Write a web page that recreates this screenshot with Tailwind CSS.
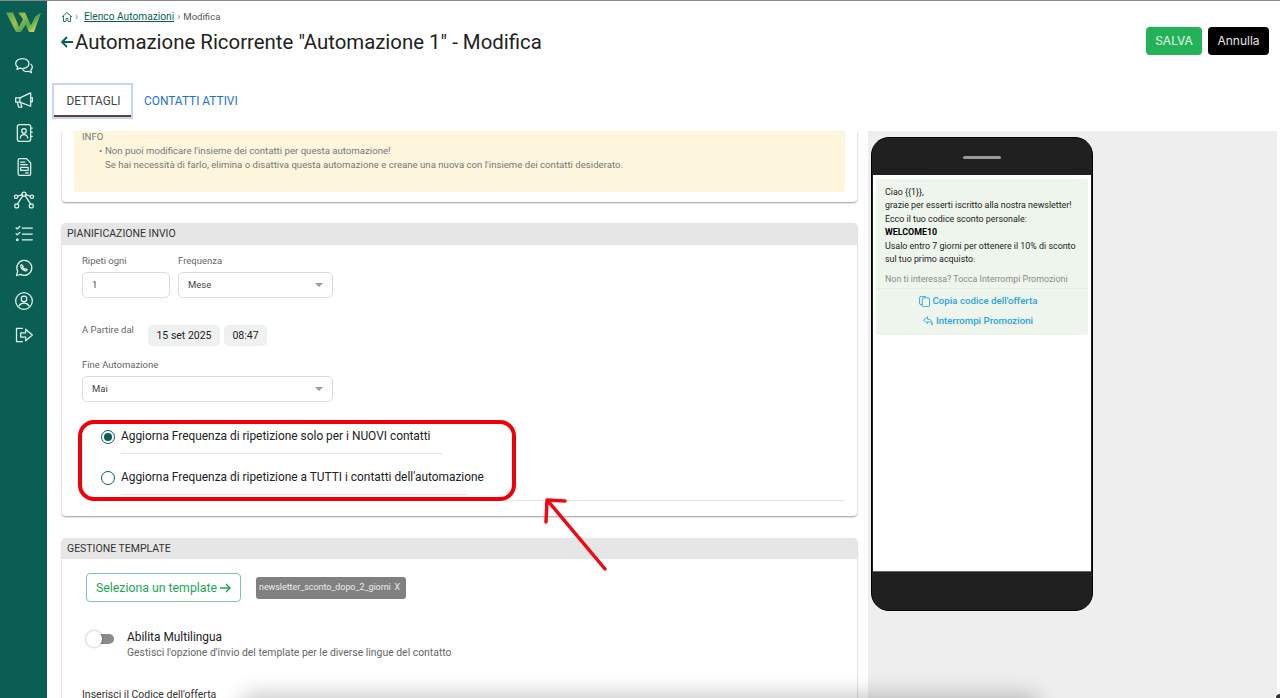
<!DOCTYPE html>
<html lang="it">
<head>
    <meta charset="UTF-8">
    <title>Automazione Ricorrente - Modifica</title>
    <script src="https://cdn.jsdelivr.net/npm/@tailwindcss/browser@4"></script>
</head>
<body class="font-['Roboto',sans-serif] bg-white overflow-hidden">
<div class="relative flex h-[698px] w-[1280px] overflow-hidden border-t border-[#8a8a8a]">

    <!-- sidebar -->
    <aside class="w-[47px] shrink-0 bg-[#0b5e54] flex flex-col items-center text-[#e4f2ee]">
        <svg class="mt-[9px] w-[36px] h-[22px]" viewBox="0 0 36 26" preserveAspectRatio="none">
            <defs><linearGradient id="logo" x1="0" y1="0" x2="1" y2="0.6"><stop offset="0" stop-color="#5aa34a"/><stop offset="0.45" stop-color="#9dc04a"/><stop offset="0.75" stop-color="#4fa552"/><stop offset="1" stop-color="#c5d64f"/></linearGradient></defs>
            <path d="M0 3h7l6 17 4-9 3 6-5 9h-5zM12 3h7l6 15 4-10 6-5-7 23h-5l-5-13-2-4z" fill="url(#logo)"/>
        </svg>
        <div class="mt-[24px] flex flex-col items-center gap-[13.6px]">
            <svg class="w-[20px] h-[20px]" viewBox="0 0 24 24" fill="none" stroke="currentColor" stroke-width="1.5" stroke-linejoin="round"><path d="M10 3c-4.5 0-8 2.7-8 6 0 1.7 1 3.2 2.400 4.300L3.500 16l3.500-1.500c1 .3 2 .5 3 .5 4.500 0 8-2.700 8-6s-3.500-6-8-6z"/><path d="M20 9.500c1.300 1 2 2.300 2 3.800 0 1.400-.7 2.700-1.800 3.600l.8 3.100-3.500-1.700c-2.800.7-6-.2-7.500-2.300"/></svg>
            <svg class="w-[20px] h-[20px]" viewBox="0 0 24 24" fill="none" stroke="currentColor" stroke-width="1.5" stroke-linejoin="round"><path d="M2 9.500h5l13-6v16l-13-5h-5z"/><path d="M7 9.500v5M4 14.500l1.500 6h4l-1.500-5"/><path d="M20 9h2v5h-2"/></svg>
            <svg class="w-[20px] h-[20px]" viewBox="0 0 24 24" fill="none" stroke="currentColor" stroke-width="1.5" stroke-linejoin="round" stroke-linecap="round"><rect x="4" y="2" width="16" height="20" rx="2.500"/><circle cx="12" cy="9.500" r="2.700"/><path d="M7.500 18c.5-3 2.500-4 4.500-4s4 1 4.500 4M20 6h2M20 11h2M20 16h2"/></svg>
            <svg class="w-[20px] h-[20px]" viewBox="0 0 24 24" fill="none" stroke="currentColor" stroke-width="1.5" stroke-linejoin="round" stroke-linecap="round"><path d="M5 4a2 2 0 0 1 2-2h8l5 5v13a2 2 0 0 1-2 2H7a2 2 0 0 1-2-2z"/><path d="M8 6h5M8 9h8"/><rect x="8" y="12.500" width="9" height="3.500"/><path d="M14 19h3"/></svg>
            <svg class="w-[22px] h-[20px]" viewBox="0 0 26 24" fill="none" stroke="currentColor" stroke-width="1.500" stroke-linejoin="round" stroke-linecap="round"><circle cx="13" cy="5" r="2.400"/><circle cx="3.500" cy="8" r="2"/><circle cx="22.500" cy="8" r="2"/><rect x="2" y="17" width="4.500" height="4.500" rx="1"/><rect x="19.500" y="17" width="4.500" height="4.500" rx="1"/><path d="M5.500 7.500 10.700 5.500M15.300 5.500 20.500 7.500M11.500 7 5 17M14.500 7 21 17"/></svg>
            <svg class="w-[20px] h-[20px]" viewBox="0 0 24 24" fill="none" stroke="currentColor" stroke-width="1.500" stroke-linecap="round" stroke-linejoin="round"><path d="M10 5h12M10 12h12M10 19h12M2.500 4.500l1.500 1.500 3-3M2.500 11.500l1.500 1.500 3-3"/><circle cx="4" cy="19" r="1"/></svg>
            <svg class="w-[20px] h-[20px]" viewBox="0 0 24 24" fill="none" stroke="currentColor" stroke-width="1.500" stroke-linejoin="round" stroke-linecap="round"><path d="M3 21l1.400-5A9 9 0 1 1 8 19.700z"/><path d="M9 8c-1 .5-1.200 1.700-.6 3 .8 1.800 2.600 3.600 4.600 4.200 1.300.4 2.400 0 2.800-1l-2-1.400-1 .8c-1-.4-2-1.400-2.500-2.500l.8-1z"/></svg>
            <svg class="w-[20px] h-[20px]" viewBox="0 0 24 24" fill="none" stroke="currentColor" stroke-width="1.500" stroke-linecap="round"><circle cx="12" cy="12" r="10"/><circle cx="12" cy="9.500" r="3.300"/><path d="M6 18c1-2.500 3.200-3.500 6-3.500s5 1 6 3.500"/></svg>
            <svg class="w-[20px] h-[20px]" viewBox="0 0 24 24" fill="none" stroke="currentColor" stroke-width="1.500" stroke-linejoin="round" stroke-linecap="round"><path d="M10 4H3v16h7"/><path d="M8 9.500h6V5l8 7-8 7v-4.500H8z"/></svg>
        </div>
    </aside>

    <main class="flex-1 min-w-0 flex flex-col">
        <!-- header -->
        <header class="h-[130px] shrink-0 pl-[14px] pr-[11px]">
            <div class="flex justify-between">
                <div>
                    <nav class="mt-[10px] flex items-center text-[10.200px] leading-[12px] text-[#555]">
                        <svg class="w-[12px] h-[12px] text-[#2f7a6c]" viewBox="0 0 24 24" fill="none" stroke="currentColor" stroke-width="2" stroke-linejoin="round"><path d="M2 12 12 3l10 9M5 10v11h5v-6h4v6h5V10"/></svg>
                        <span class="ml-[2px] mr-[6px] text-[#888]">›</span>
                        <a class="underline text-[#0b5e54]">Elenco Automazioni</a>
                        <span class="ml-[3px] mr-[3px] text-[#888]">›</span>
                        <span class="text-[9.600px]">Modifica</span>
                    </nav>
                    <h1 class="mt-[5px] flex items-center text-[20.400px] leading-[28px] text-[#222]">
                        <svg class="w-[14px] h-[14px] text-[#0b5e54] -ml-[1px] mr-[1px]" viewBox="0 0 14 14" fill="none" stroke="currentColor" stroke-width="1.800"><path d="M13 7H2M7 2 2 7l5 5"/></svg>
                        Automazione Ricorrente "Automazione 1" - Modifica
                    </h1>
                </div>
                <div class="mt-[26px] flex gap-[6px] font-['Inter',sans-serif] text-[12px]">
                    <button class="w-[56px] h-[28px] rounded-[4px] bg-[#22b257] text-white/90">SALVA</button>
                    <button class="w-[61px] h-[28px] rounded-[4px] bg-black text-white/90">Annulla</button>
                </div>
            </div>
            <div class="mt-[27px] flex items-center text-[11.900px]">
                <div class="w-[81px] h-[36px] -ml-[9px] pl-[2px] pt-[1px] border-[2.500px] border-[#c5d6f5] flex flex-col items-center justify-center relative text-[#444]">
                    DETTAGLI
                    <span class="absolute left-0 right-0 bottom-0 h-[2px] bg-[#5e4038]"></span>
                </div>
                <a class="ml-[11px] pt-[1px] text-[#1a6fd8]">CONTATTI ATTIVI</a>
            </div>
        </header>

        <!-- body -->
        <div class="flex-1 min-h-0 flex overflow-hidden">
            <section class="w-[795px] ml-[15px] shrink-0 text-[#555]">
                <!-- info -->
                <div class="h-[71px] bg-white rounded-b-[4px] shadow-[0_1px_2px_rgba(0,0,0,0.4)] px-[12px]">
                    <div class="h-[61px] bg-[#fdf6dd] rounded-b-[3px] px-[8px] text-[9.630px] leading-[14.500px] text-[#777]">
                        <p class="leading-[11px]">INFO</p>
                        <div class="flex ml-[17px] mt-[1.500px]">
                            <span class="w-[6px] shrink-0">•</span>
                            <p>Non puoi modificare l'insieme dei contatti per questa automazione!<br>Se hai necessità di farlo, elimina o disattiva questa automazione e creane una nuova con l'insieme dei contatti desiderato.</p>
                        </div>
                    </div>
                </div>

                <!-- pianificazione -->
                <div class="mt-[21px] h-[293px] bg-white rounded-[4px] shadow-[0_1px_2px_rgba(0,0,0,0.4)]">
                    <h2 class="h-[22px] bg-[#e6e6e6] rounded-t-[4px] pl-[5px] text-[10.500px] leading-[22px] text-[#333]">PIANIFICAZIONE INVIO</h2>
                    <div class="pl-[20px] pt-[10px] text-[9.500px]">
                        <div class="flex gap-[8px]">
                            <label class="block w-[88px]"><span class="block leading-[12px] text-[#666]">Ripeti ogni</span>
                                <span class="mt-[5px] flex items-center h-[26px] rounded-[5px] border border-[#dcdcdc] px-[9px] text-[#444]">1</span>
                            </label>
                            <label class="block w-[155px]"><span class="block leading-[12px] text-[#666]">Frequenza</span>
                                <span class="mt-[5px] flex items-center justify-between h-[26px] rounded-[5px] border border-[#dcdcdc] pl-[9px] pr-[9px] text-[#444]">Mese<i class="border-x-[4px] border-t-[4px] border-x-transparent border-t-[#999]"></i></span>
                            </label>
                        </div>
                        <div class="mt-[27px] flex gap-[13px]">
                            <span class="text-[#666] leading-[12px] -mt-[1px] w-[53px]">A Partire dal</span>
                            <div class="flex gap-[4px] text-[10.500px] text-[#222]">
                                <span class="w-[72px] h-[21px] rounded-[5px] bg-[#eff1f1] flex items-center justify-center">15 set 2025</span>
                                <span class="w-[43px] h-[21px] rounded-[5px] bg-[#eff1f1] flex items-center justify-center">08:47</span>
                            </div>
                        </div>
                        <label class="block mt-[13px] w-[251px]"><span class="block leading-[12px] text-[#666]">Fine Automazione</span>
                            <span class="mt-[5px] flex items-center justify-between h-[26px] rounded-[5px] border border-[#dcdcdc] pl-[9px] pr-[9px] text-[#444]">Mai<i class="border-x-[4px] border-t-[4px] border-x-transparent border-t-[#999]"></i></span>
                        </label>
                    </div>
                    <div class="ml-[39px] mt-[27px] text-[11.900px] text-[#222]">
                        <div class="flex items-center gap-[6px] h-[16px]">
                            <span class="w-[14px] h-[14px] rounded-full border-[1.500px] border-[#0b5e54] flex items-center justify-center"><i class="w-[8px] h-[8px] rounded-full bg-[#0b5e54]"></i></span>
                            Aggiorna Frequenza di ripetizione solo per i NUOVI contatti
                        </div>
                        <div class="ml-[20px] mt-[8px] w-[321px] border-t border-[#e6e6e6]"></div>
                        <div class="flex items-center gap-[6px] h-[16px] mt-[16px]">
                            <span class="w-[14px] h-[14px] rounded-full border-[1.500px] border-[#0b5e54]"></span>
                            Aggiorna Frequenza di ripetizione a TUTTI i contatti dell'automazione
                        </div>
                        <div class="ml-[20px] mt-[8px] w-[346px] border-t border-[#e6e6e6]"></div>
                        <div class="ml-[20px] mt-[5px] mr-[12px] border-t border-[#e6e6e6]"></div>
                    </div>
                </div>

                <!-- gestione template -->
                <div class="mt-[22px] bg-white rounded-t-[4px] shadow-[0_1px_2px_rgba(0,0,0,0.4)] h-[170px]">
                    <h2 class="h-[21px] bg-[#e6e6e6] rounded-t-[4px] pl-[5px] text-[10.500px] leading-[21px] text-[#333]">GESTIONE TEMPLATE</h2>
                    <div class="pl-[24px] pt-[14px]">
                        <div class="flex items-center gap-[15px]">
                            <button class="w-[155px] h-[29px] pt-[1px] rounded-[4px] border border-[#7cc89a] text-[12.300px] text-[#22a657] flex items-center justify-center gap-[3px]">Seleziona un template
                                <svg class="w-[11px] h-[10px]" viewBox="0 0 11 10" fill="none" stroke="currentColor" stroke-width="1.500"><path d="M0 5h10M6 1l4 4-4 4"/></svg>
                            </button>
                            <span class="w-[150px] h-[22px] rounded-[3px] bg-[#808080] text-white/85 text-[8.900px] flex items-center pl-[3px] justify-between"><span>newsletter_sconto_dopo_2_giorni</span><span class="pr-[6px]">X</span></span>
                        </div>
                        <div class="flex items-start mt-[27px]">
                            <span class="relative w-[28px] h-[16px] mt-[2px] shrink-0">
                                <span class="absolute left-[3px] top-[3px] w-[25px] h-[10px] rounded-full bg-[#8a8a8a]"></span>
                                <span class="absolute left-0 top-0 w-[16px] h-[16px] rounded-full bg-white shadow-[0_0_3px_rgba(0,0,0,0.35)]"></span>
                            </span>
                            <div class="ml-[13px]">
                                <p class="text-[11.900px] leading-[16px] text-[#222]">Abilita Multilingua</p>
                                <p class="text-[10.400px] leading-[16px] text-[#666]">Gestisci l'opzione d'invio del template per le diverse lingue del contatto</p>
                            </div>
                        </div>
                    </div>
                    <p class="ml-[20px] mt-[28px] text-[10.500px] leading-[12px] text-[#333]">Inserisci il Codice dell'offerta</p>
                </div>
            </section>

            <!-- anteprima -->
            <section class="ml-[11px] w-[409px] h-[568px] bg-[#eeeeee] shrink-0 rounded-br-[6px]">
                <div class="ml-[3px] mt-[6px] w-[222px] h-[474px] rounded-[18px] border border-black bg-[#202020] flex flex-col overflow-hidden">
                    <div class="h-[37px] shrink-0 flex justify-center pt-[18px]"><i class="w-[38px] h-[3px] rounded-full bg-[#999]"></i></div>
                    <div class="h-[397px] bg-white border-b border-[#666] mx-px px-[3px] pt-[4px] text-[8.900px] text-[#222]">
                        <div class="h-[156px] bg-[#eef5ec] rounded-[3px] pl-[9px] pt-[7px] whitespace-nowrap">
                            <p class="leading-[13.400px]">Ciao {{1}},<br>grazie per esserti iscritto alla nostra newsletter!<br>Ecco il tuo codice sconto personale:<br><b class="text-black">WELCOME10</b><br>Usalo entro 7 giorni per ottenere il 10% di sconto<br>sul tuo primo acquisto.</p>
                            <p class="mt-[7px] leading-[12px] text-[#8a8a8a]">Non ti interessa? Tocca Interrompi Promozioni</p>
                            <div class="mt-[3px] -ml-[9px] pr-[8px] border-t border-[#e6ede4] text-[#2aa3d8] text-[9.700px] font-medium flex flex-col items-center">
                                <span class="flex items-center gap-[3px] mt-[6px] h-[12px]"><svg class="w-[11px] h-[11px]" viewBox="0 0 12 12" fill="none" stroke="currentColor"><rect x="3.500" y="2" width="8" height="9.500" rx="1.500"/><path d="M3.500 9.500H2.500a2 2 0 0 1-2-2V2.500a2 2 0 0 1 2-2h5"/></svg>Copia codice dell'offerta</span>
                                <span class="flex items-center gap-[3px] mt-[8px] h-[12px]"><svg class="w-[10px] h-[10px]" viewBox="0 0 12 12" fill="none" stroke="currentColor" stroke-linejoin="round"><path d="M5.500 1 .5 5l5 4V7h2c1.500 0 3 1 3.500 4 .5-4-1-7-4-7h-1.500z"/></svg>Interrompi Promozioni</span>
                            </div>
                        </div>
                    </div>
                </div>
            </section>
        </div>
    </main>

    <!-- annotazione rossa sopra la pagina -->
    <div class="absolute left-[78px] top-[419px] w-[438px] h-[81px] rounded-[16px] border-[4px] border-[#ee0006]"></div>
    <svg class="absolute left-[540px] top-[495px] w-[70px] h-[80px]" viewBox="0 0 70 80" fill="none" stroke="#ee0a14" stroke-width="3.500" stroke-linecap="round" stroke-linejoin="round"><path d="M65 73 8 5M6 26 7 4 25 5"/></svg>

    <!-- ombra sfocata in basso, angolo della finestra -->
    <div class="absolute left-[240px] top-[692px] w-[800px] h-[30px] rounded-full bg-black/20 blur-[10px]"></div>
    <div class="absolute right-0 bottom-0 w-[4px] h-[4px] bg-black/80 rounded-tl-[4px]"></div>
</div>
</body>
</html>
